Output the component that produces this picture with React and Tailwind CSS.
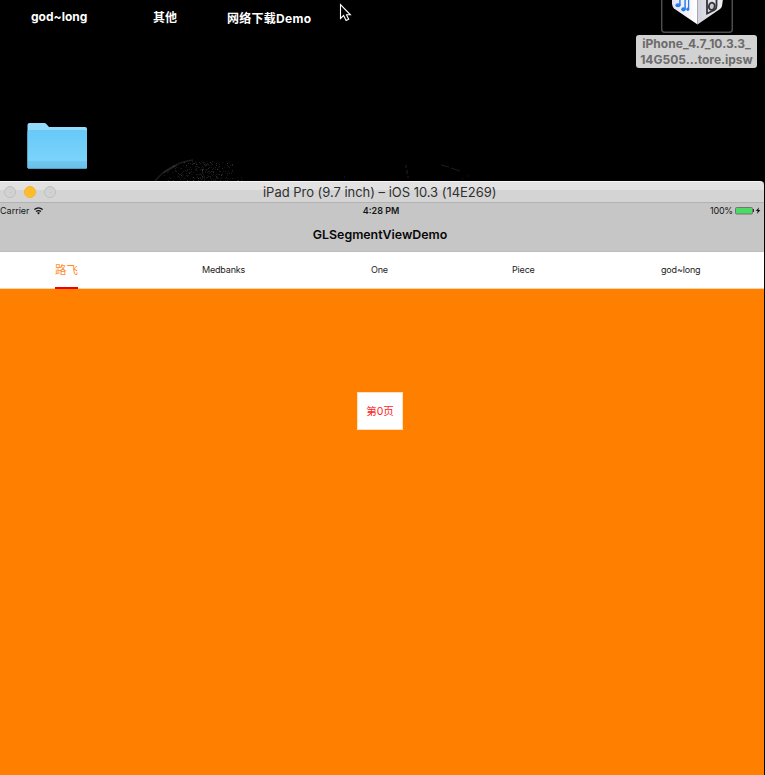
import React from "react";

const latin = "font-['Inter','Noto_Sans_CJK_SC',sans-serif]";

// Pseudo-random stars along the dim limb of the planet on the wallpaper.
function speckles() {
  let seed = 17;
  const rnd = () => {
    seed = (seed * 16807) % 2147483647;
    return seed / 2147483647;
  };
  const dots = [];
  for (let i = 0; i < 330; i++) {
    const x = 160 + (rnd() + rnd()) * 0.5 * 84;
    const y = 161 + rnd() * 20;
    const limb = 161 + Math.pow(Math.max(0, 190 - x) / 34, 2) * 20;
    if (y > limb) dots.push({ x: Math.round(x), y: Math.round(y), o: 0.04 + rnd() * 0.09 });
  }
  return dots;
}

function Wallpaper() {
  return (
    <svg className="absolute left-0 top-0" width="765" height="182" viewBox="0 0 765 182">
      <path d="M155 181Q170 163 193 160" fill="none" stroke="#1c1c1c" strokeWidth="1.6" />
      <path d="M163 173L177 165" stroke="#2c2c2c" strokeWidth="1.2" />
      {speckles().map((d, i) => (
        <rect key={i} x={d.x} y={d.y} width="1" height="1" fill="#fff" opacity={d.o} />
      ))}
      <path d="M406 165v3M407 170v4M408 176v2" stroke="#222" />
      <path d="M441 165l8 2M451 168l9 3" stroke="#1d1d1d" fill="none" />
      <path d="M344 177h1M468 176h1M462 179h1" stroke="#222" />
    </svg>
  );
}

function Cursor() {
  return (
    <svg className="absolute left-[339px] top-[3px]" width="14" height="20" viewBox="0 0 14 20">
      <path d="M1.5 1.5v14l3.1-3 2.5 5 2.6-1.2-2.2-4.5h3.9z" fill="#000" stroke="#fff" strokeWidth="1.1" />
    </svg>
  );
}

function Folder() {
  return (
    <svg className="absolute left-[27px] top-[122px]" width="61" height="48" viewBox="0 0 61 48">
      <defs>
        <linearGradient id="folder" x1="0" y1="0" x2="0" y2="1">
          <stop offset="0" stopColor="#68c9f8" />
          <stop offset="0.78" stopColor="#7ad3fa" />
          <stop offset="0.8" stopColor="#70c8f0" />
          <stop offset="1" stopColor="#68c0ea" />
        </linearGradient>
      </defs>
      <path d="M.5 3Q.5 1 2.5 1H17.5Q19 1 19.8 2.500L22 5H58Q60 5 60 7V46H.5z" fill="#94dcff" />
      <path d="M.5 10Q.5 8 2.500 8H58Q60 8 60 10V45Q60 47 58 47H2.500Q.5 47 .5 45z" fill="url(#folder)" />
      <path d="M1 46.500H59.500" stroke="#4a9fca" />
    </svg>
  );
}

function Package() {
  return (
    <svg className="absolute left-[661px] top-0" width="72" height="33" viewBox="0 0 72 33">
      <defs>
        <linearGradient id="cubeLeft" x1="0" y1="0" x2="1" y2="0">
          <stop offset="0" stopColor="#e2e3f3" />
          <stop offset="1" stopColor="#fff" />
        </linearGradient>
        <linearGradient id="cubeRight" x1="0" y1="0" x2="1" y2="0">
          <stop offset="0" stopColor="#d2d2dc" />
          <stop offset="1" stopColor="#eeeef4" />
        </linearGradient>
      </defs>
      <path d="M.7-4V29.500Q.7 32.300 3.500 32.300H68.500Q71.300 32.300 71.300 29.500V-4" fill="none" stroke="#4d4d4d" strokeWidth="1.500" />
      <path d="M11-1H36.500V24.500L13 8.500Q11.500 7 11 4z" fill="url(#cubeLeft)" />
      <path d="M36.500-1H62L61 6Q60.500 8 59 9L36.500 24.500z" fill="url(#cubeRight)" />
      <g fill="#2b7de9" stroke="#2b7de9">
        <ellipse cx="17" cy="5.300" rx="2.600" ry="2" stroke="none" />
        <path d="M18.900-1V5" strokeWidth="1.500" />
        <ellipse cx="22.500" cy="9.300" rx="2.300" ry="2.100" stroke="none" />
        <path d="M24.100-1V9" strokeWidth="1.500" />
        <path d="M27.600-1V9" strokeWidth="1.300" />
        <ellipse cx="26.800" cy="9.300" rx="1.500" ry="1.800" stroke="none" />
      </g>
      <path d="M46 -1V13.500L53.500 10Q55.500 9 55.500 6V-1" fill="none" stroke="#343438" strokeWidth="1.800" />
      <ellipse cx="50.800" cy="6.300" rx="2.900" ry="3.600" transform="rotate(14 50.800 6.300)" fill="#c9c9cf" stroke="#343438" strokeWidth="1.800" />
    </svg>
  );
}

function Desktop() {
  return (
    <div className="relative h-[181px] shrink-0 text-[12px] font-bold leading-[16px] text-white">
      <Wallpaper />
      <span className="absolute left-[31px] top-[9px] whitespace-nowrap">god~long</span>
      <span className="absolute left-[153px] top-[10px] whitespace-nowrap">其他</span>
      <span className="absolute left-[227px] top-[11px] whitespace-nowrap tracking-[0.28px]">网络下载Demo</span>
      <Cursor />
      <Package />
      <div className="absolute left-[636px] top-[35px] flex h-[33px] w-[121px] flex-col items-center rounded-[3px] bg-[#d2d2d2] pt-px text-[12px] leading-[16px] text-[#6b6b6b]">
        <span className="whitespace-nowrap tracking-[0.05px]">iPhone_4.7_10.3.3_</span>
        <span className="whitespace-nowrap">14G505…tore.ipsw</span>
      </div>
      <Folder />
    </div>
  );
}

function TitleBar() {
  return (
    <header className="relative flex h-[22px] shrink-0 items-center rounded-tr-[4px] border-b border-t border-b-[#b2b2b2] border-t-[#f5f5f5] bg-[linear-gradient(#e2e2e2_0_8px,#d4d4d4_8px)]">
      <div className="flex gap-2 pl-1">
        <i className="flex size-3 items-center justify-center rounded-full border border-[#c0c0c0] bg-[#d2d2d2]"><b className="size-px bg-[#bdbdbd]" /></i>
        <i className="size-3 rounded-full border border-[#f2b534] bg-[#ffbd2e]" />
        <i className="flex size-3 items-center justify-center rounded-full border border-[#c0c0c0] bg-[#d2d2d2]"><b className="size-px bg-[#bdbdbd]" /></i>
      </div>
      <h1 className="absolute left-[263px] top-px whitespace-nowrap text-[13px] leading-[18px] tracking-[-0.03px] text-[#303030]">
        iPad Pro (9.7 inch) – iOS 10.3 (14E269)
      </h1>
    </header>
  );
}

function StatusBar() {
  return (
    <div className="grid h-[16px] grid-cols-3 items-center text-[9px] leading-[14px] text-[#161616]">
      <div className="flex items-center gap-1">
        <span>Carrier</span>
        <svg className="-mt-px" width="9" height="8" viewBox="0 0 9 8" fill="none" stroke="#111" strokeWidth="1.300">
          <path d="M.4 2.600Q4.500-.9 8.600 2.600M2 4.600Q4.500 2.500 7 4.600" />
          <path d="M3 5.800Q4.500 4.600 6 5.800L4.500 7.400z" fill="#111" stroke="none" />
        </svg>
      </div>
      <div className="pr-[2px] text-center font-semibold">4:28 PM</div>
      <div className="flex items-center justify-end gap-[2px] pr-[3px]">
        <span className="tracking-[-0.2px]">100%</span>
        <svg className="-mt-px" width="26" height="9" viewBox="0 0 26 9">
          <rect x=".5" y="1.500" width="17" height="6.500" rx="1" fill="#4cd964" stroke="#747474" />
          <path d="M18 3h1v3h-1z" fill="#333" />
          <path d="M24 1.200L20.800 5h1.900L22 8 25.400 4h-2z" fill="#111" />
        </svg>
      </div>
    </div>
  );
}

function App() {
  return (
    <main className={`${latin} flex h-[775px] w-[765px] flex-col overflow-hidden bg-black`}>
      <Desktop />
      <section className="flex w-[764px] flex-1 flex-col">
        <TitleBar />
        <div className="h-[49px] shrink-0 border-b border-[#bdbdbd] bg-[#c6c6c6]">
          <StatusBar />
          <h2 className="pt-[6px] pr-1 text-center text-[12.400px] font-semibold leading-[20px] text-[#080808]">GLSegmentViewDemo</h2>
        </div>
        <nav className="flex h-[37px] shrink-0 whitespace-nowrap border-b border-[#ffd4a6] bg-white pl-[55px] text-[9px] leading-[36px] tracking-[-0.180px] text-[#222]">
          <div className="flex w-[147px]">
            <span className="h-[37px] w-[23px] border-b-2 border-[#f00000] text-[11.500px] leading-[37px] tracking-normal text-[#ff8b2a]">路飞</span>
          </div>
          <span className="w-[169px]">Medbanks</span>
          <span className="w-[141px]">One</span>
          <span className="w-[149px]">Piece</span>
          <span>god~long</span>
        </nav>
        <div className="flex flex-1 items-start justify-center bg-[#ff8000] pr-1 pt-[103px]">
          <div className="flex h-[38px] w-[46px] items-center justify-center border border-[#ffe0c0] bg-white pt-[2px] text-[10.500px] text-[#f22]">第0页</div>
        </div>
      </section>
    </main>
  );
}

export default App;
